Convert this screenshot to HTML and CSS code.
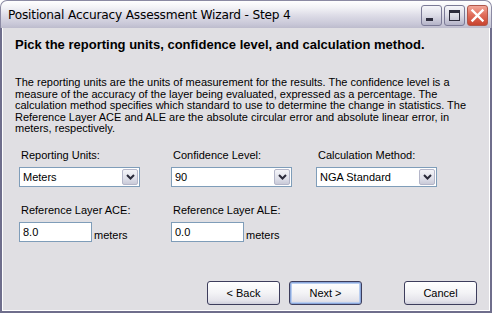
FILE: index.html
```html
<!DOCTYPE html>
<html>
<head>
<meta charset="utf-8">
<link rel="stylesheet" href="styles.css">
</head>
<body>
<div class="window">
  <div class="titlebar">
    <span class="title">Positional Accuracy Assessment Wizard - Step 4</span>
    <div class="tb-buttons">
      <span class="tb-btn"><svg width="21" height="21" viewBox="0 0 21 21"><rect x="5" y="13" width="7" height="3" fill="#2c2c3c"/></svg></span>
      <span class="tb-btn"><svg width="21" height="21" viewBox="0 0 21 21"><rect x="5.5" y="5.5" width="10" height="10" fill="none" stroke="#2c2c3c" stroke-width="1"/><rect x="5" y="5" width="11" height="3" fill="#2c2c3c"/></svg></span>
      <span class="tb-btn close"><svg width="21" height="21" viewBox="0 0 21 21"><path d="M5.5 5.5 L15.5 15.5 M15.5 5.5 L5.5 15.5" stroke="#fff" stroke-width="2.4" stroke-linecap="square"/></svg></span>
    </div>
  </div>
  <div class="client">
    <h1 class="heading">Pick the reporting units, confidence level, and calculation method.</h1>
    <p class="desc">The reporting units are the units of measurement for the results. The confidence level is a measure of the accuracy of the layer being evaluated, expressed as a percentage. The calculation method specifies which standard to use to determine the change in statistics. The Reference Layer ACE and ALE are the absolute circular error and absolute linear error, in meters, respectively.</p>
    <div class="fields">
      <div class="field">
        <label class="lbl">Reporting Units:</label>
        <div class="combo"><span class="combo-val">Meters</span><span class="drop"><svg width="9" height="6" viewBox="0 0 9 6"><path d="M1 1 L4.5 4.5 L8 1" fill="none" stroke="#2a2a3a" stroke-width="2"/></svg></span></div>
      </div>
      <div class="field">
        <label class="lbl">Confidence Level:</label>
        <div class="combo"><span class="combo-val">90</span><span class="drop"><svg width="9" height="6" viewBox="0 0 9 6"><path d="M1 1 L4.5 4.5 L8 1" fill="none" stroke="#2a2a3a" stroke-width="2"/></svg></span></div>
      </div>
      <div class="field">
        <label class="lbl">Calculation Method:</label>
        <div class="combo"><span class="combo-val">NGA Standard</span><span class="drop"><svg width="9" height="6" viewBox="0 0 9 6"><path d="M1 1 L4.5 4.5 L8 1" fill="none" stroke="#2a2a3a" stroke-width="2"/></svg></span></div>
      </div>
      <div class="field field-text">
        <label class="lbl">Reference Layer ACE:</label>
        <div class="text-row"><span class="textbox">8.0</span><span class="unit">meters</span></div>
      </div>
      <div class="field field-text">
        <label class="lbl">Reference Layer ALE:</label>
        <div class="text-row"><span class="textbox">0.0</span><span class="unit">meters</span></div>
      </div>
    </div>
    <div class="buttons">
      <span class="btn">&lt; Back</span>
      <span class="btn default">Next &gt;</span>
      <span class="btn cancel">Cancel</span>
    </div>
  </div>
</div>
</body>
</html>
```
FILE: styles.css
```css
html, body {
  margin: 0;
  padding: 0;
  background: #ffffff;
}
.window {
  width: 492px;
  height: 313px;
  box-sizing: border-box;
  display: flex;
  flex-direction: column;
  font-family: "Liberation Sans", Arial, sans-serif;
  color: #000;
}
.titlebar {
  height: 28px;
  box-sizing: border-box;
  border: 1px solid #8b8aa3;
  border-bottom: none;
  border-radius: 7px 7px 0 0;
  background: linear-gradient(to bottom, #ffffff 0%, #f2f2f6 25%, #dcdbe6 55%, #c9c8d8 85%, #bdbccd 100%);
  display: flex;
  align-items: center;
  justify-content: space-between;
  padding: 0 3px 0 7px;
}
.title {
  font-family: "DejaVu Sans", sans-serif;
  font-size: 12.2px;
  color: #000;
  letter-spacing: -0.2px;
  margin-top: 1px;
}
.tb-buttons {
  display: flex;
  gap: 2px;
  margin-top: 1px;
}
.tb-btn {
  width: 21px;
  height: 21px;
  box-sizing: border-box;
  border: 1px solid #7b7a96;
  border-radius: 3px;
  background: linear-gradient(to bottom, #f6f6fa 0%, #dcdce6 50%, #b4b3c8 100%);
  display: flex;
  align-items: center;
  justify-content: center;
  overflow: hidden;
}
.tb-btn svg { display: block; flex: none; }
.tb-btn.close {
  border-color: #b0574a;
  background: linear-gradient(to bottom, #f2a89a 0%, #e16f5c 45%, #c8432f 100%);
}
.client {
  flex: 1;
  background: #e0dfe3;
  border: 2px solid #6f6e8c;
  border-top: none;
  box-shadow: inset 1px 0 0 #ffffff, inset -1px 0 0 #ffffff, inset 0 -1px 0 #ffffff;
  padding: 9px 13px 0 13px;
  display: flex;
  flex-direction: column;
}
.heading {
  margin: 0;
  font-size: 13px;
  line-height: 16px;
  font-weight: bold;
  letter-spacing: 0;
}
.desc {
  margin: 24px 0 0 0;
  font-size: 11px;
  line-height: 11.6px;
  width: 462px;
}
.fields {
  margin: 14px 0 0 4px;
  display: grid;
  grid-template-columns: 152px 145px 130px;
  row-gap: 17px;
}
.field {
  display: flex;
  flex-direction: column;
  gap: 5px;
}
.lbl {
  font-size: 11px;
  line-height: 13px;
  padding-left: 2px;
  color: #000;
}
.combo {
  width: 121px;
  height: 20px;
  box-sizing: border-box;
  border: 1px solid #7f9db9;
  background: #fff;
  display: flex;
  align-items: stretch;
  justify-content: space-between;
  padding: 1px;
}
.combo-val {
  font-size: 11px;
  line-height: 16px;
  padding-left: 2px;
}
.drop {
  width: 16px;
  box-sizing: border-box;
  border: 1px solid #b4b6c9;
  border-radius: 2px;
  background: linear-gradient(to bottom, #f4f4f8 0%, #dfe0ea 60%, #c9cad8 100%);
  display: flex;
  align-items: center;
  justify-content: center;
}
.drop svg { display: block; }
.text-row {
  display: flex;
  align-items: flex-end;
  gap: 2px;
}
.textbox {
  width: 73px;
  height: 20px;
  box-sizing: border-box;
  border: 1px solid #7f9db9;
  background: #fff;
  font-size: 11px;
  line-height: 16px;
  padding: 1px 0 0 3px;
}
.unit {
  font-size: 11px;
  line-height: 13px;
  margin-bottom: 0;
}
.buttons {
  margin-top: auto;
  margin-bottom: 6px;
  display: flex;
  justify-content: flex-end;
  gap: 9px;
}
.btn {
  width: 73px;
  height: 24px;
  box-sizing: border-box;
  border: 1px solid #3d3d5c;
  border-radius: 3px;
  background: linear-gradient(to bottom, #ffffff 0%, #f3f3f6 50%, #e4e3ea 85%, #cfcfdc 100%);
  font-size: 11px;
  display: flex;
  align-items: center;
  justify-content: center;
}
.btn.default {
  box-shadow: inset 0 0 0 1px #8aa6da, inset 0 0 0 2px #b8cdf0;
}
.btn.cancel {
  margin-left: 33px;
}
```
